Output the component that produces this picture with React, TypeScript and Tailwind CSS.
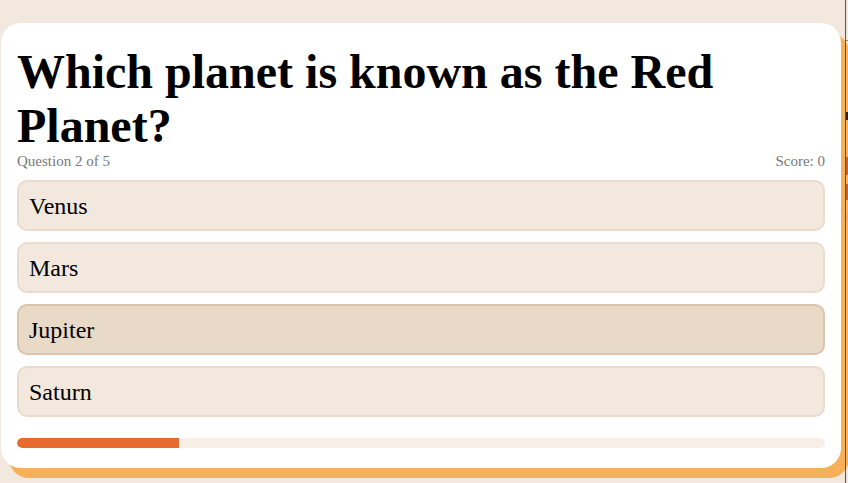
import { useState } from 'react';

const options = ['Venus', 'Mars', 'Jupiter', 'Saturn'];

export default function App() {
  const [hovered] = useState(2);
  const current = 2;
  const total = 5;
  const score = 0;

  return (
    <div className="flex h-[483px] w-full overflow-hidden bg-[#f2e8dd] font-['Liberation_Serif','Times_New_Roman',serif]">
      <div className="flex-1">
        {/* Quiz card */}
        <div className="ml-[1px] mt-[23px] w-[840px] rounded-[20px] bg-white px-4 pb-5 pt-[22px] shadow-[8px_10px_0_#f7b05a]">
          <h1 className="text-[48px] font-bold leading-[54px] text-black">
            Which planet is known as the Red Planet?
          </h1>
          <div className="flex justify-between text-[15px] leading-[17px] text-[#777]">
            <span>Question {current} of {total}</span>
            <span>Score: {score}</span>
          </div>

          <div className="mt-[10px] flex flex-col gap-[11px]">
            {options.map((opt, i) => (
              <button
                key={opt}
                className={`h-[51px] rounded-[10px] border-2 px-[10px] text-left text-[24px] text-black ${
                  i === hovered ? 'border-[#dcc3ad] bg-[#e9d9c7]' : 'border-[#e9dccb] bg-[#f2e8dd]'
                }`}
              >
                {opt}
              </button>
            ))}
          </div>

          {/* Progress */}
          <div className="mt-[21px] h-[10px] w-full overflow-hidden rounded-full bg-[#f7efe5]">
            <div className="h-full rounded-l-full bg-[#e76a30]" style={{ width: `${((current - 1) / total) * 100}%` }} />
          </div>
        </div>
      </div>

      {/* neighbouring frame edge */}
      <div className="w-px shrink-0 bg-[#555]" />
      <div className="flex w-[2px] shrink-0 flex-col">
        <div className="h-[40px]" />
        <div className="h-px bg-[#e76a30]" />
        <div className="h-[71px]" />
        <div className="h-[8px] bg-[#222]" />
        <div className="h-[37px]" />
        <div className="h-[18px] bg-[#c8612c]" />
        <div className="h-[9px]" />
        <div className="h-[16px] bg-[#c8612c]" />
        <div className="h-[14px]" />
        <div className="h-[6px] bg-[#e8a860]" />
      </div>
    </div>
  );
}
